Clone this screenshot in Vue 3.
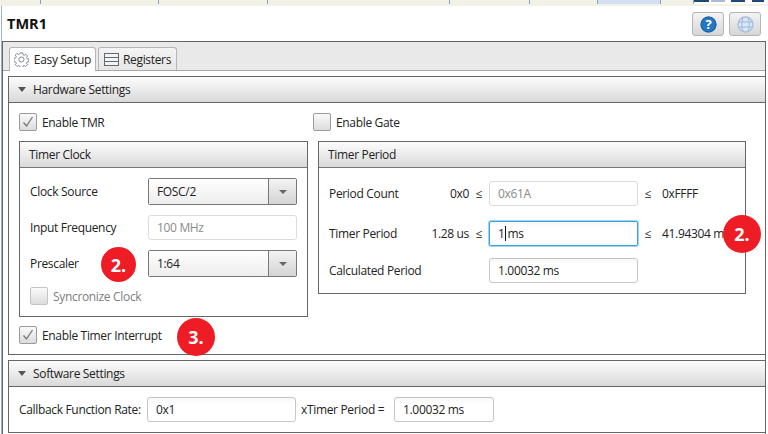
<script setup>
const stripTabs = [41, 118, 109, 182, 80, 68, 63, 33]
</script>

<template>
  <div class="app">
    <div class="strip">
      <div v-for="(w, i) in stripTabs" :key="i" class="strip-tab" :class="{ active: i === 6 }" :style="{ width: w + 'px' }"></div>
      <div class="strip-icons"><i></i><i class="pale"></i><i class="c"></i><i class="d"></i></div>
    </div>
    <div class="frame">
      <header class="head">
        <h1>TMR1</h1>
        <div class="head-btns">
          <button class="ibtn">
            <svg width="17" height="17" viewBox="0 0 17 17"><circle cx="8.5" cy="8.5" r="8" fill="#2477c0"/><circle cx="8.5" cy="8.5" r="7.5" fill="none" stroke="#1b5fa0"/><text x="8.5" y="13" text-anchor="middle" class="q">?</text></svg>
          </button>
          <button class="ibtn">
            <svg width="17" height="17" viewBox="0 0 17 17" fill="none"><circle cx="8.5" cy="8.5" r="7.5" fill="#dbe6f5" stroke="#a9c0e0" stroke-width="1.4"/><path d="M1.5 6h14M1.5 11h14M6 1.5c-1.6 4-1.6 10 0 14M11 1.5c1.6 4 1.6 10 0 14" stroke="#9db8de"/></svg>
          </button>
        </div>
      </header>
      <div class="pane">
        <div class="tabs">
          <div class="tab on">
            <svg width="15" height="15" viewBox="0 0 15 15" fill="none" stroke="#7d8790"><path d="M6.2.8h2.6l.3 1.8 1.3.6 1.5-1 1.8 1.8-1 1.5.6 1.3 1.8.3v2.6l-1.8.3-.6 1.3 1 1.5-1.8 1.8-1.5-1-1.3.6-.3 1.8H6.2l-.3-1.8-1.3-.6-1.5 1-1.8-1.8 1-1.5-.6-1.3-1.8-.3V6.2l1.8-.3.6-1.3-1-1.5 1.8-1.8 1.5 1 1.3-.6z"/><circle cx="7.5" cy="7.5" r="2.6"/></svg>
            <span>Easy Setup</span>
          </div>
          <div class="tab reg">
            <svg width="15" height="15" viewBox="0 0 15 15" fill="none" stroke="#5f6a74"><rect x=".5" y="1.5" width="14" height="12" fill="#f4f4f4"/><path d="M.5 5.5h14M.5 9.5h14"/></svg>
            <span>Registers</span>
          </div>
        </div>
        <div class="content">
          <section class="titled hw">
            <div class="t-head"><span class="tri"></span>Hardware Settings</div>
            <div class="hw-body">
              <div class="col-l">
                <label class="chk"><span class="box"><svg width="14" height="14" viewBox="0 0 14 14" fill="none"><path d="M2.5 7.5l3 3.5 6-9" stroke="#777" stroke-width="1.3"/></svg></span>Enable TMR</label>
                <div class="group clock">
                  <div class="g-head">Timer Clock</div>
                  <div class="g-body">
                    <div class="row r1"><span class="lbl">Clock Source</span>
                      <div class="combo"><span class="c-val">FOSC/2</span><span class="c-arrow"></span></div></div>
                    <div class="row r2"><span class="lbl">Input Frequency</span>
                      <div class="field dis wide">100 MHz</div></div>
                    <div class="row r3"><span class="lbl">Prescaler</span>
                      <div class="combo"><span class="c-val">1:64</span><span class="c-arrow"></span></div>
                      <span class="badge b-pre">2.</span></div>
                    <label class="chk sync"><span class="box"></span>Syncronize Clock</label>
                  </div>
                </div>
                <label class="chk int"><span class="box"><svg width="14" height="14" viewBox="0 0 14 14" fill="none"><path d="M2.5 7.5l3 3.5 6-9" stroke="#777" stroke-width="1.3"/></svg></span>Enable Timer Interrupt<span class="badge b-int">3.</span></label>
              </div>
              <div class="col-r">
                <label class="chk gate"><span class="box"></span>Enable Gate</label>
                <div class="group period">
                  <div class="g-head">Timer Period</div>
                  <div class="p-body">
                    <div class="p-row p1"><span class="p-lbl">Period Count</span><span class="p-min">0x0</span><span class="le">≤</span><div class="field dis">0x61A</div><span class="le after">≤</span><span class="p-max">0xFFFF</span></div>
                    <div class="p-row p2"><span class="p-lbl">Timer Period</span><span class="p-min">1.28 us</span><span class="le">≤</span><div class="field focus"><span>1</span><span class="caret"></span><span>ms</span></div><span class="le after">≤</span><span class="p-max">41.94304 ms</span><span class="badge b-per">2.</span></div>
                    <div class="p-row p3"><span class="p-lbl calc">Calculated Period</span><div class="field">1.00032 ms</div></div>
                  </div>
                </div>
              </div>
            </div>
          </section>
          <section class="titled sw">
            <div class="t-head"><span class="tri"></span>Software Settings</div>
            <div class="sw-body">
              <span class="sw-lbl">Callback Function Rate:</span>
              <div class="field rate">0x1</div>
              <span class="sw-lbl2">xTimer Period =</span>
              <div class="field calc2">1.00032 ms</div>
            </div>
          </section>
        </div>
      </div>
    </div>
  </div>
</template>

<style>
html, body { margin: 0; background: #fff; }
</style>

<style scoped>
.app {
  width: 768px; height: 434px; overflow: hidden; background: #fff; color: #222;
  font-family: "Open Sans", "Noto Sans", sans-serif; font-size: 12px; letter-spacing: -0.33px; white-space: nowrap;
}
.strip { height: 4px; display: flex; background: #f0f0e6; border-bottom: 2px solid #f1f1e8; }
.strip-tab { box-sizing: border-box; border-right: 1px solid #8ba2bd; background: #f2f1e6; }
.strip-tab.active { background: #d3dff2; }
.strip-icons { flex: 1; display: flex; background: #fff; }
.strip-icons i { width: 15px; height: 2px; background: #1d4a7a; }
.strip-icons i.pale { width: 14px; background: #a9bcd3; margin-left: 2px; }
.strip-icons i.c { width: 14px; margin-left: 6px; }
.strip-icons i.d { width: 12px; margin-left: 7px; }

.frame { margin-left: 1px; border-left: 1px solid #9db0c6; height: 428px; box-sizing: border-box; }
.head { height: 35px; display: flex; align-items: center; justify-content: space-between; padding: 0 7px 0 5px; }
.head h1 { margin: 0; font-size: 14.5px; font-weight: 700; color: #111; letter-spacing: 0; }
.head-btns { display: flex; gap: 5px; margin-top: 1px; }
.ibtn {
  width: 32px; height: 24px; padding: 0; display: flex; align-items: center; justify-content: center;
  border: 1px solid #b5b5b5; border-radius: 3px; background: linear-gradient(#f3f3f3, #d6d6d6);
}
.q { font: 700 13px "Open Sans", sans-serif; fill: #fff; }

.pane { width: 764px; height: 393px; box-sizing: border-box; border: 1px solid #666; border-bottom: 0; background: #fff; }
.tabs { height: 29px; box-sizing: border-box; display: flex; gap: 2px; padding: 5px 0 0 6px; background: #e9e9e9; border-bottom: 1px solid #a8a8a8; }
.tab {
  height: 23px; box-sizing: border-box; padding: 0 4px; display: flex; align-items: center; gap: 5px;
  border: 1px solid #b5b5b5; border-bottom: 0; border-radius: 3px 3px 0 0;
  background: linear-gradient(#f4f4f4, #e6e6e6); margin-bottom: -1px;
}
.tab.on { background: #fff; height: 24px; width: 87px; }
.tab.reg { width: 79px; padding-left: 5px; gap: 4px; }

.content { padding: 5px 0 0 5px; }
.titled { width: 758px; box-sizing: border-box; border: 1px solid #666; }
.hw { height: 279px; }
.sw { height: 73px; margin-top: 5px; }
.t-head {
  height: 26px; box-sizing: border-box; display: flex; align-items: center; padding-left: 9px; gap: 7px;
  background: linear-gradient(#fbfbfb, #f4f4f4 25%, #d9d9d9); border-bottom: 1px solid #666;
}
.tri { width: 0; height: 0; border-left: 4px solid transparent; border-right: 4px solid transparent; border-top: 5px solid #555; }

.hw-body { display: flex; padding: 10px 0 0 10px; }
.col-l { width: 294px; }
.col-r { margin-left: 5px; }
.chk { display: flex; align-items: center; gap: 5px; height: 18px; position: relative; }
.gate { margin-left: -5px; }
.box {
  width: 18px; height: 18px; box-sizing: border-box; display: flex; align-items: center; justify-content: center;
  border: 1px solid #9a9a9a; border-radius: 2px; background: linear-gradient(#fafafa, #dcdcdc);
}
.group { box-sizing: border-box; border: 1px solid #666; margin-top: 10px; }
.clock { width: 289px; height: 176px; }
.period { width: 428px; height: 153px; }
.g-head {
  height: 26px; box-sizing: border-box; display: flex; align-items: center; padding-left: 9px;
  background: linear-gradient(#fbfbfb, #f4f4f4 25%, #d9d9d9); border-bottom: 1px solid #777;
}
.g-body { padding: 10px 0 0 10px; }
.row { display: flex; align-items: center; height: 27px; position: relative; }
.r2 { margin-top: 10px; height: 25px; }
.r3 { margin-top: 10px; }
.lbl { width: 118px; }
.combo { width: 149px; height: 27px; box-sizing: border-box; display: flex; border: 1px solid #777; border-radius: 2px; background: #fafafa; }
.c-val { flex: 1; display: flex; align-items: center; padding-left: 8px; background: linear-gradient(#fff, #ededed); border-right: 1px solid #777; }
.c-arrow { width: 27px; display: flex; align-items: center; justify-content: center; background: linear-gradient(#f3f3f3, #d4d4d4); }
.c-arrow::after { content: ""; width: 0; height: 0; border-left: 4px solid transparent; border-right: 4px solid transparent; border-top: 4px solid #666; }
.field {
  width: 149px; height: 25px; box-sizing: border-box; display: flex; align-items: center; padding-left: 8px;
  border: 1px solid #c6c6c6; border-radius: 3px; background: linear-gradient(#f7f7f7, #fff 25%);
}
.dis { color: #8a8a8a; border-color: #dcdcdc; background: #fff; }
.focus { border: 1px solid #39a3dc; box-shadow: 0 0 0 1px #9fd3ef; border-radius: 2px; }
.caret { width: 1px; height: 15px; background: #111; margin: 0 2px 0 0; }
.sync { margin-top: 10px; color: #7d7d7d; }
.sync .box { border-color: #c4c4c4; }
.int { margin-top: 9px; }

.p-body { padding-top: 13px; }
.p-row { display: flex; align-items: center; height: 25px; position: relative; }
.p1 { margin-bottom: 15px; }
.p2 { margin-bottom: 12px; }
.p-lbl { width: 90px; padding-left: 10px; flex: none; }
.p-min { width: 50px; text-align: right; flex: none; }
.le { width: 20px; text-align: center; flex: none; }
.le.after { width: 20px; }
.p-max { margin-left: 4px; }
.calc { width: 160px; }
.badge {
  position: absolute; display: flex; align-items: center; justify-content: center; border-radius: 50%;
  background: #ee1c25; color: #fff; font-weight: 700; font-size: 18px; letter-spacing: 0; font-family: "Open Sans", sans-serif;
}
.b-pre { width: 35px; height: 35px; left: 71px; top: -3px; }
.b-int { width: 38px; height: 38px; left: 158px; top: -8px; }
.b-per { width: 38px; height: 38px; left: 404px; top: -6px; }

.sw-body { display: flex; align-items: center; height: 45px; padding-left: 10px; }
.sw-lbl { width: 128px; flex: none; }
.sw-lbl2 { width: 98px; padding-left: 5px; box-sizing: border-box; flex: none; }
.calc2 { width: 100px; }
</style>
